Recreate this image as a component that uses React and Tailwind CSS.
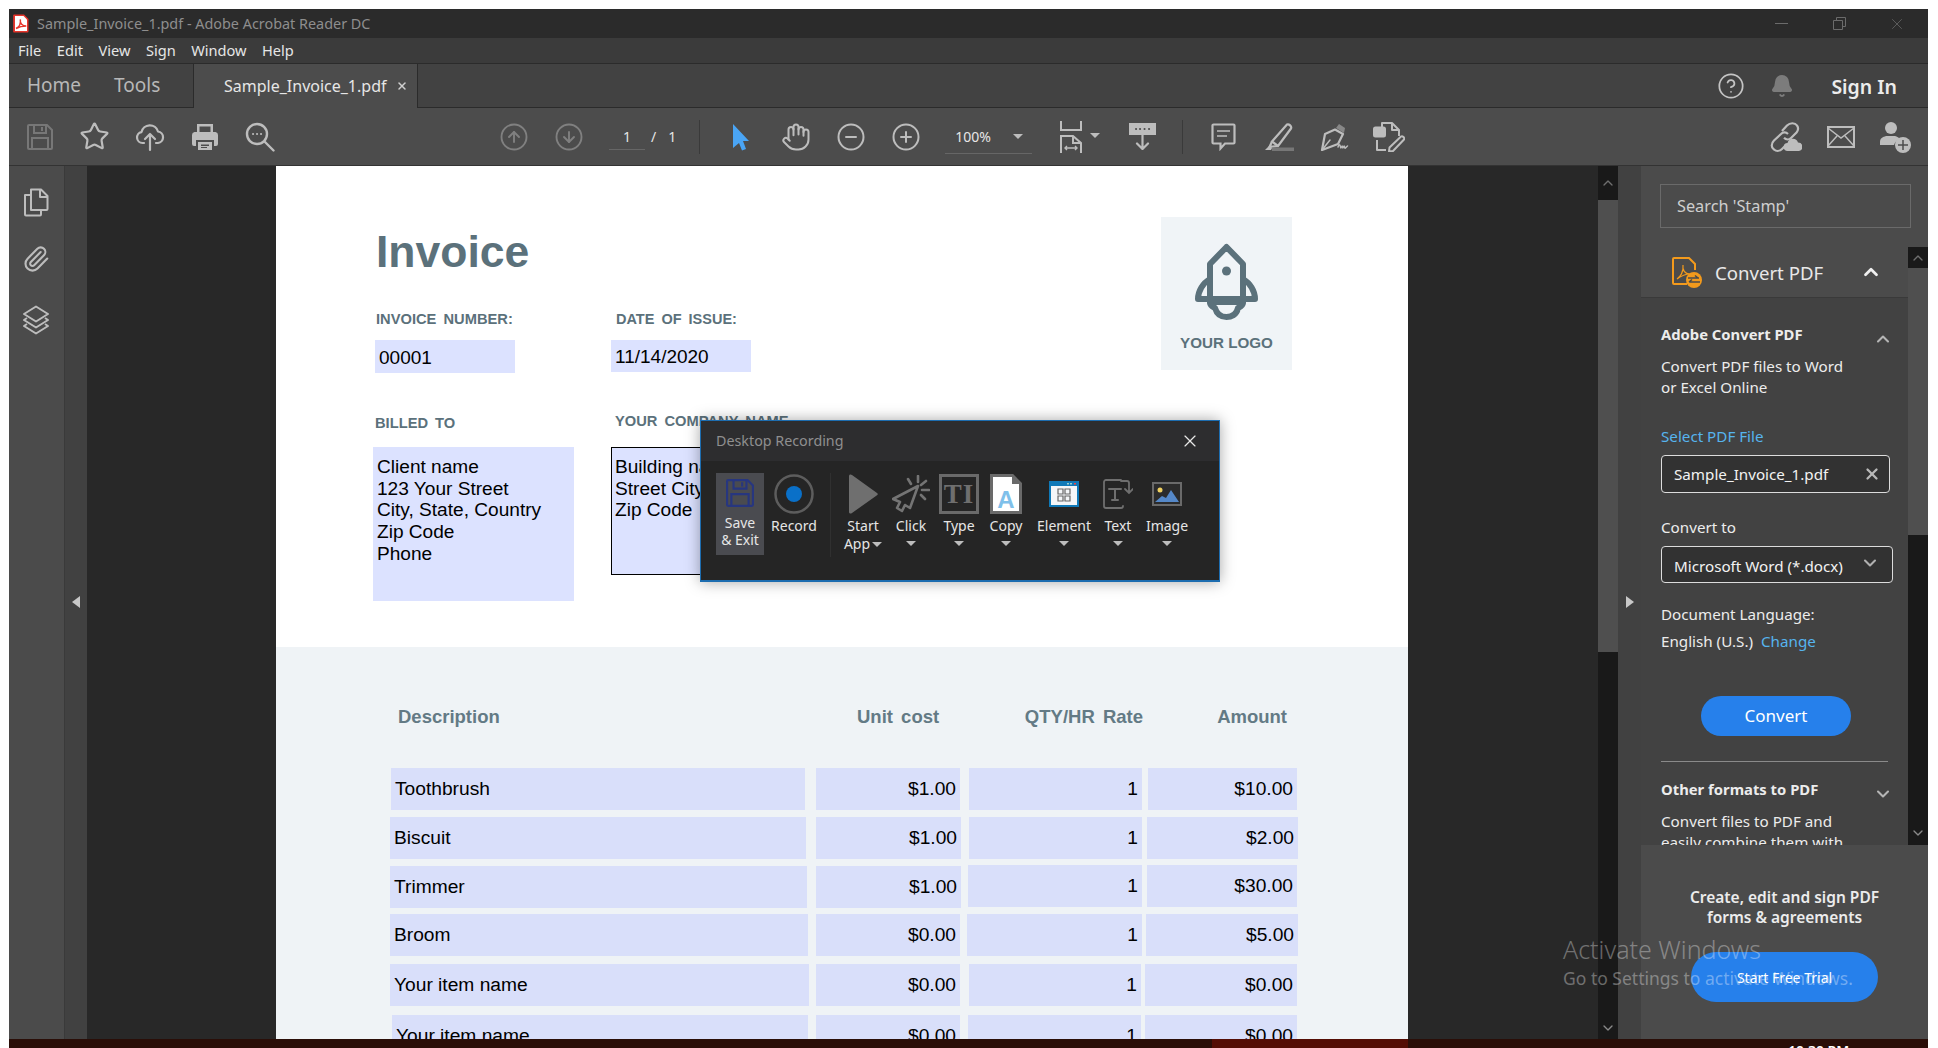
import { Star, Hand, CircleMinus, CirclePlus, CircleArrowUp, CircleArrowDown, ChevronUp, ChevronDown, X, Paperclip, CircleHelp, Bell } from "lucide-react";

const menuItems = ["File", "Edit", "View", "Sign", "Window", "Help"];

const rows = [
  { pad: "pl-[115px] mt-[40px]", name: "Toothbrush", unit: "$1.00", amount: "$10.00", d: "w-[414px]", u: "ml-[11px] w-[144px]", q: "ml-[9px] w-[173px]", a: "ml-[6px] w-[149px]" },
  { pad: "pl-[114px] mt-[7px]", name: "Biscuit", unit: "$1.00", amount: "$2.00", d: "w-[416px]", u: "ml-[10px] w-[145px]", q: "ml-[8px] w-[173px]", a: "ml-[5px] w-[151px]" },
  { pad: "pl-[114px] mt-[7px]", name: "Trimmer", unit: "$1.00", amount: "$30.00", d: "w-[417px]", u: "ml-[9px] w-[145px]", q: "ml-[7px] w-[174px] -mt-px", a: "ml-[5px] w-[150px] -mt-px" },
  { pad: "pl-[114px] mt-[6px]", name: "Broom", unit: "$0.00", amount: "$5.00", d: "w-[418px]", u: "ml-[8px] w-[144px]", q: "ml-[7px] w-[175px]", a: "ml-[4px] w-[152px]" },
  { pad: "pl-[114px] mt-[8px]", name: "Your item name", unit: "$0.00", amount: "$0.00", d: "w-[419px]", u: "ml-[7px] w-[144px]", q: "ml-[9px] w-[172px]", a: "ml-[4px] w-[152px]" },
  { pad: "pl-[116px] mt-[9px]", name: "Your item name", unit: "$0.00", amount: "$0.00", d: "w-[416px]", u: "ml-[8px] w-[144px]", q: "ml-[8px] w-[173px]", a: "ml-[4px] w-[152px]" },
];

// toolbar icons, drawn to match the reference
function SaveIcon({ className }) {
  return (
    <svg width="26" height="26" viewBox="0 0 26 26" fill="none" stroke="currentColor" strokeWidth="2" className={className}>
      <path d="M2 1h18l5 5v18a1 1 0 0 1-1 1H2a1 1 0 0 1-1-1V2a1 1 0 0 1 1-1z" />
      <path d="M7 1v8h12V1" />
      <path d="M5 25V14h16v11" />
      <path d="M15 3v4" />
    </svg>
  );
}

function CloudIcon() {
  return (
    <svg width="30" height="30" viewBox="0 0 30 30" fill="none" stroke="currentColor" strokeWidth="2.2" strokeLinecap="round" strokeLinejoin="round">
      <path d="M9 21H7.5a5.5 5.5 0 0 1-1-10.9A8.5 8.5 0 0 1 23 9.500a5.800 5.800 0 0 1 0 11.500H21" />
      <path d="M15 28V12M10 17l5-5 5 5" />
    </svg>
  );
}

function PrinterIcon() {
  return (
    <svg width="28" height="28" viewBox="0 0 28 28" fill="currentColor">
      <path d="M6 9V1h16v8h-2.500V3.500h-11V9z" />
      <path d="M3.500 9h21A3 3 0 0 1 27 12v9a2 2 0 0 1-2 2h-2v-6H5v6H3a2 2 0 0 1-2-2v-9a3 3 0 0 1 2.500-3z" />
      <path d="M7 19h14v8H7zm3 2.500v1.500h8v-1.500zm0 2.500v1h6v-1z" fillRule="evenodd" />
    </svg>
  );
}

function SearchDots() {
  return (
    <svg width="30" height="30" viewBox="0 0 30 30" fill="none" stroke="currentColor" strokeWidth="2.400" strokeLinecap="round">
      <circle cx="12" cy="12" r="10" />
      <path d="M19.500 19.500 28.500 28.500" />
      <path d="M8 12h.1M12 12h.1M16 12h.1" strokeWidth="2" />
    </svg>
  );
}

function ArrowPointer() {
  return (
    <svg width="18" height="28" viewBox="0 0 18 28" fill="#4aa5f5">
      <path d="M1 1 17 18h-6l3 8-4 1.500L7 20l-6 5z" />
    </svg>
  );
}

function FitIcon() {
  return (
    <svg width="22" height="32" viewBox="0 0 22 32" fill="none" stroke="currentColor" strokeWidth="2">
      <path d="M1 0v9h20V0" />
      <path d="M1 32V15h12l8 7v10" />
      <path d="M13 15v7h8" />
      <path d="M5 27h12M7 25l-2 2 2 2M15 25l2 2-2 2" strokeWidth="1.400" />
    </svg>
  );
}

function DownloadRuler() {
  return (
    <svg width="27" height="27" viewBox="0 0 27 27" fill="none" stroke="currentColor" strokeWidth="2.200" strokeLinecap="round">
      <path d="M1 1h25v10H1z" fill="currentColor" />
      <path d="M7 6h.1M11 6h.1M15.500 6h.1M20 6h.1" stroke="#4c4c4c" strokeWidth="2" />
      <path d="M13.500 11v15M8 20.500l5.500 5.500 5.500-5.500" />
    </svg>
  );
}

function CommentIcon() {
  return (
    <svg width="25" height="28" viewBox="0 0 25 28" fill="none" stroke="currentColor" strokeWidth="2.200">
      <path d="M2.500 1.500h20a1 1 0 0 1 1 1v17a1 1 0 0 1-1 1H14l-4.500 5v-5h-7a1 1 0 0 1-1-1v-17a1 1 0 0 1 1-1z" />
      <path d="M6 8h13M6 13h10" strokeWidth="1.600" />
    </svg>
  );
}

function MarkerIcon() {
  return (
    <svg width="30" height="28" viewBox="0 0 30 28" fill="none" stroke="currentColor" strokeWidth="2.200" strokeLinejoin="round">
      <path d="M23 1.500c2-1 5 2 4 4L14 23l-6-4.500z" />
      <path d="M8 18.500 5.500 24l8.500-1" />
      <path d="M1 27l4-4 3 2-1 2z" fill="currentColor" strokeWidth="0" />
      <path d="M8 24.500h22V28H8z" fill="#777" stroke="none" />
    </svg>
  );
}

function PenIcon() {
  return (
    <svg width="30" height="28" viewBox="0 0 30 28" fill="none" stroke="currentColor" strokeWidth="2.200" strokeLinejoin="round" strokeLinecap="round">
      <path d="M16 6.500 24 11l-5 10-16 6 3-16z" />
      <path d="M3 27 11 17" strokeWidth="1.500" />
      <path d="M17 5l3-4 6 4-1 5" fill="#888" stroke="none" />
      <path d="M19 24c1-3 2-3 2.500 0s1.500-3 2-0 1.500-3 2 0 1.500 0 3-1" strokeWidth="1.500" />
    </svg>
  );
}

function FillSignIcon() {
  return (
    <svg width="32" height="30" viewBox="0 0 32 30" fill="none" stroke="currentColor" strokeWidth="2" strokeLinejoin="round">
      <path d="M9 5V1h10l7 7v6" />
      <path d="M19 1v7h7" />
      <rect x="1" y="5.500" width="11" height="9" rx="1.500" fill="currentColor" />
      <path d="M4 18v10h9" />
      <path d="M28 14.500c1.500-1 4 1.500 3 3L20 29l-4 .5.500-4z" />
    </svg>
  );
}

function CloudLink() {
  return (
    <svg width="32" height="30" viewBox="0 0 32 30" fill="none" stroke="currentColor" strokeWidth="2.200">
      <path d="M12 9l5-5.500c3-3 8-3 10 0 1.500 2 1 5-.5 7l-5.500 5.500c-2 2-5 1.800-7-.2" />
      <path d="M18 12c-2-2-5-2.200-7 0l-7 6.500c-3 3-3 7 0 9 2.500 2 6 1.500 8-.5l4-4" />
      <path d="M18 29a4 4 0 0 1-.5-8 5.500 5.500 0 0 1 10.500-.5 4.300 4.300 0 0 1 1 8.500z" fill="currentColor" stroke="none" />
    </svg>
  );
}

function MailBox() {
  return (
    <svg width="28" height="22" viewBox="0 0 28 22" fill="none" stroke="currentColor" strokeWidth="2">
      <rect x="1" y="1" width="26" height="20" />
      <path d="M1 2l13 10L27 2M1 20l9-10M27 20l-9-10" strokeWidth="1.500" />
    </svg>
  );
}

function UserPlus() {
  return (
    <svg width="32" height="32" viewBox="0 0 32 32" fill="currentColor">
      <circle cx="11" cy="7" r="6" />
      <path d="M0 24v-3c0-4 3-5 6-6h9c2 .5 4 1.500 5 3a9 9 0 0 0-6 6z" />
      <circle cx="23" cy="24" r="8" />
      <path d="M23 19v10M18 24h10" stroke="#4c4c4c" strokeWidth="1.500" />
    </svg>
  );
}

function PagesIcon() {
  return (
    <svg width="26" height="29" viewBox="0 0 26 29" fill="none" stroke="currentColor" strokeWidth="2" strokeLinejoin="round">
      <path d="M8 21V1.500h10l6.500 6.500v13a1 1 0 0 1-1 1H8z" />
      <path d="M17 1.500V9h7.500" />
      <path d="M7 7H2v19.500a1 1 0 0 0 1 1h14a1 1 0 0 0 1-1V22" />
    </svg>
  );
}

function LayersIcon({ className }) {
  return (
    <svg width="28" height="30" viewBox="0 0 28 30" fill="none" stroke="currentColor" strokeWidth="2" strokeLinejoin="round" className={className}>
      <path d="M14 1.500 26 9l-12 7.500L2 9z" />
      <path d="M5 13 2 15l12 7.500L26 15l-3-2" />
      <path d="M5 19l-3 2 12 7.500L26 21l-3-2" />
    </svg>
  );
}

function ConvertIcon() {
  return (
    <svg width="30" height="31" viewBox="0 0 30 31" fill="none" stroke="#f39a1c" strokeWidth="2">
      <path d="M15 27H2a1 1 0 0 1-1-1V2a1 1 0 0 1 1-1h15l6 6v6" />
      <path d="M5 22c3-2 7-7 6-14-1 5 2 9 7 9-5 0-9 2-13 5z" strokeWidth="1.200" />
      <circle cx="22" cy="23" r="8" fill="#f39a1c" stroke="none" />
      <path d="M16 21h11M23 18.500l3 2.500M28 25H17M20 22.500 17 25" stroke="#4b4b4b" strokeWidth="1.600" />
    </svg>
  );
}

function AcrobatIcon() {
  return (
    <svg width="16" height="19" viewBox="0 0 16 19" className="shrink-0">
      <path d="M1 .5h10l4.500 4.500v12.500a1 1 0 0 1-1 1H1a.8.8 0 0 1-.8-1V1.300A.8.8 0 0 1 1 .5z" fill="#e8352b" />
      <path d="M2 2h8.500L14 5.500V17H2z" fill="#fff" />
      <path d="M3 14.500c3-1.500 5-5 4.300-9-.5 4 2 6.500 6 6.500-4 0-7 .7-10.300 2.500z" fill="none" stroke="#e8352b" strokeWidth="1.500" />
    </svg>
  );
}

function RocketLogo() {
  return (
    <svg width="63" height="77" viewBox="0 0 63 77" fill="none" stroke="#5b717b" strokeWidth="6" strokeLinejoin="round">
      <path d="M31.500 4 15 21v38h33V21z" />
      <path d="M15 36C8 40 3 48 3 56h57c0-8-5-16-12-20" />
      <path d="M15 59c0 4 3 5 5 6 2 7 7 9 11.500 9s10-2 11.500-9c2-1 5-2 5-6" />
      <circle cx="31.500" cy="28" r="4.500" fill="#5b717b" stroke="none" />
    </svg>
  );
}

function Slot({ children, className = "w-[55px]" }) {
  return <div className={`flex shrink-0 items-center justify-center ${className}`}>{children}</div>;
}

function Caret({ className = "" }) {
  return <div className={`h-0 w-0 border-x-[5px] border-t-[5px] border-x-transparent border-t-[#bdbdbd] ${className}`} />;
}

function RecordTool({ icon, label, line2, noCaret, className }) {
  return (
    <div className={`flex shrink-0 flex-col items-center pt-[1px] ${className}`}>
      <div className="flex h-[40px] items-center justify-center">{icon}</div>
      <div className="mt-[3px] text-[14px] leading-[18px] text-[#e6e6e6]">{label}</div>
      {line2 && (
        <div className="flex items-center gap-[2px] text-[14px] leading-[18px] text-[#e6e6e6]">
          {line2}
          <Caret className="border-t-[#aaa]" />
        </div>
      )}
      {!line2 && !noCaret && <Caret className="mt-[6px] border-t-[#aaa]" />}
    </div>
  );
}

function RecordingDialog() {
  return (
    <div className="absolute left-[700px] top-[420px] h-[162px] w-[520px] border border-b-2 border-[#1d6db0] bg-[#252525] font-['Noto_Sans',sans-serif] shadow-[0_0_14px_rgba(0,0,0,0.35)]">
      <div className="flex h-[40px] items-center justify-between bg-[#2d2d2f] pl-[15px] pr-[19px]">
        <span className="text-[14.300px] text-[#8f8f8f]">Desktop Recording</span>
        <X size={20} strokeWidth={1.4} className="text-[#e8e8e8]" />
      </div>
      <div className="flex pl-[15px] pt-[12px]">
        <div className="flex h-[82px] w-[48px] shrink-0 flex-col items-center bg-[#4a4b50] pt-[5px]">
          <div className="relative text-[#27367f]">
            <SaveIcon className="h-[30px] w-[28px]" />
          </div>
          <div className="mt-[6px] text-center text-[14px] leading-[17px] text-[#e6e6e6]">
            Save
            <br />
            &amp;&nbsp;Exit
          </div>
        </div>
        <RecordTool
          className="w-[60px]"
          label="Record"
          noCaret
          icon={
            <svg width="40" height="40" viewBox="0 0 40 40">
              <circle cx="20" cy="20" r="18.500" fill="none" stroke="#5d5d5d" strokeWidth="2.500" />
              <circle cx="20" cy="20" r="8" fill="#0a70c8" />
            </svg>
          }
        />
        <div className="ml-[6px] mr-[10px] h-[84px] w-px shrink-0 bg-[#303030]" />
        <RecordTool
          className="w-[44px]"
          label="Start"
          line2="App"
          icon={
            <svg width="30" height="40" viewBox="0 0 30 40" fill="#6f6f6f">
              <path d="M1 2c0-1.500 1.500-2 3-1l25 18c1 .8 1 1.500 0 2.200L4 39c-1.500 1-3 .5-3-1z" />
            </svg>
          }
        />
        <RecordTool
          className="w-[52px]"
          label="Click"
          icon={
            <svg width="38" height="38" viewBox="0 0 38 38" fill="none" stroke="#747474" strokeWidth="2.600" strokeLinejoin="round">
              <path d="M26 11 1 24l7 3-3 6 5 3 3-6 5 3z" />
              <path d="M16 4l3 5M26 1v6M34 6l-5 4M37 15h-7M33 24l-4-4" strokeLinecap="round" />
            </svg>
          }
        />
        <RecordTool
          className="w-[44px]"
          label="Type"
          icon={
            <div className="flex h-[40px] w-[40px] items-center justify-center border-[3px] border-[#6a6a6a] font-['Liberation_Serif',serif] text-[27px] font-bold leading-none tracking-[1px] text-[#6f6f6f]">
              TI
            </div>
          }
        />
        <RecordTool
          className="w-[50px]"
          label="Copy"
          icon={
            <svg width="32" height="40" viewBox="0 0 32 40">
              <path d="M1.500 1.500h21l8 8v29h-29z" fill="#fff" stroke="#6a6a6a" strokeWidth="3" />
              <path d="M22 1v9h9z" fill="#6a6a6a" />
              <text x="16" y="34" textAnchor="middle" fontFamily="Liberation Sans, sans-serif" fontWeight="700" fontSize="24" fill="#7fc0ea">A</text>
            </svg>
          }
        />
        <RecordTool
          className="w-[66px]"
          label="Element"
          icon={
            <svg width="30" height="26" viewBox="0 0 30 26">
              <rect width="30" height="26" fill="#0f79b8" />
              <rect x="2" y="5" width="26" height="19" fill="#f4f6f8" />
              <path d="M9 8h5v5H9zM16 8h5v5h-5zM9 15h5v5H9zM16 15h5v5h-5z" fill="none" stroke="#666" strokeWidth="1.200" />
              <path d="M18 2h2v1.500h-2zM21 2h2v1.500h-2z" fill="#9cc" />
              <path d="M25 2h2v1.500h-2z" fill="#e44" />
            </svg>
          }
        />
        <RecordTool
          className="w-[42px]"
          label="Text"
          icon={
            <svg width="30" height="30" viewBox="0 0 30 30" fill="none" stroke="#6f6f6f" strokeWidth="1.800" strokeLinecap="round">
              <path d="M18 1H3a2 2 0 0 0-2 2v24a2 2 0 0 0 2 2h15a2 2 0 0 0 2-2" />
              <path d="M6 10h12M12 10v11M9 21h6" strokeWidth="2" />
              <path d="M18 2h6a2 2 0 0 1 2 2v9M22 10l4 4 4-4" />
            </svg>
          }
        />
        <RecordTool
          className="w-[56px]"
          label="Image"
          icon={
            <svg width="30" height="24" viewBox="0 0 30 24">
              <rect x="1" y="1" width="28" height="22" fill="#2b2b2b" stroke="#6a6a6a" strokeWidth="2" />
              <circle cx="8" cy="8" r="2.500" fill="#f0d060" />
              <path d="M3 20l7-6 4 2 5-8 8 12z" fill="#5588c8" />
            </svg>
          }
        />
      </div>
    </div>
  );
}

function ScrollBar({ thumbClass, topClass, chevronClass = "" }) {
  return (
    <div className="flex h-full w-[20px] shrink-0 flex-col items-center bg-[#191919]">
      <div className={`flex w-full shrink-0 items-center justify-center ${topClass}`}>
        <ChevronUp size={16} strokeWidth={2} className="text-[#6f6f6f]" />
      </div>
      <div className={`w-full shrink-0 bg-[#4f4f4f] ${thumbClass}`} />
      <div className="flex-1" />
      <ChevronDown size={16} strokeWidth={2} className={`shrink-0 text-[#8a8a8a] ${chevronClass}`} />
    </div>
  );
}

function InvoicePage() {
  return (
    <div className="h-full w-[1132px] shrink-0 overflow-hidden bg-white font-['Liberation_Sans',Arial,sans-serif]">
      <div className="flex h-[481px] pl-[97px]">
        <div className="w-[238px] shrink-0">
          <h1 className="ml-[3px] mt-[64px] text-[44.500px] font-bold leading-[44px] text-[#5b717b]">Invoice</h1>
          <div className="ml-[3px] mt-[37px] text-[14.700px] font-bold leading-[16px] text-[#5b717b] [word-spacing:3px]">INVOICE NUMBER:</div>
          <div className="ml-[2px] mt-[13px] h-[33px] w-[140px] bg-[#dce2ff] pl-[4px] pt-[1px] text-[19px] leading-[33px] text-black">00001</div>
          <div className="ml-[2px] mt-[42px] text-[14.700px] font-bold leading-[16px] text-[#5b717b] [word-spacing:3px]">BILLED TO</div>
          <div className="mt-[16px] h-[154px] w-[201px] bg-[#dce2ff] pl-[4px] pt-[9px] text-[19.100px] leading-[21.700px] text-black">
            Client name
            <br />
            123 Your Street
            <br />
            City, State, Country
            <br />
            Zip Code
            <br />
            Phone
          </div>
        </div>
        <div className="w-[550px] shrink-0 pt-[108px]">
          <div className="ml-[5px] mt-[37px] text-[14.500px] font-bold leading-[16px] text-[#5b717b] [word-spacing:3px]">DATE OF ISSUE:</div>
          <div className="mt-[13px] h-[32px] w-[140px] bg-[#dce2ff] pl-[4px] pt-[1px] text-[19px] leading-[32px] text-black">11/14/2020</div>
          <div className="ml-[4px] mt-[41px] text-[14.700px] font-bold leading-[16px] text-[#5b717b] [word-spacing:3px]">YOUR COMPANY NAME</div>
          <div className="mt-[18px] h-[128px] w-[200px] border border-black bg-[#dce2ff] pl-[3px] pt-[8px] text-[19.100px] leading-[21.700px] text-black">
            Building name
            <br />
            Street City
            <br />
            Zip Code
          </div>
        </div>
        <div className="mt-[51px] flex h-[153px] w-[131px] shrink-0 flex-col items-center bg-[#f0f4f7] pt-[26px]">
          <RocketLogo />
          <div className="mt-[13px] text-[15.200px] font-bold leading-[20px] text-[#5b717b]">YOUR LOGO</div>
        </div>
      </div>
      <div className="h-full bg-[#eff3f6]">
        <div className="flex pl-[122px] pt-[59px] text-[18.500px] font-bold leading-[22px] text-[#637a85] [word-spacing:3px]">
          <div className="w-[459px] shrink-0">Description</div>
          <div className="w-[82px] shrink-0 whitespace-nowrap text-right">Unit cost</div>
          <div className="w-[204px] shrink-0 text-right">QTY/HR Rate</div>
          <div className="w-[144px] shrink-0 text-right">Amount</div>
        </div>
        {rows.map((r, i) => (
          <div key={i} className={`flex h-[42px] items-start text-[19.200px] leading-[42px] text-black ${r.pad}`}>
            <div className={`h-[42px] shrink-0 bg-[#d9dffa] pl-[4px] ${r.d}`}>{r.name}</div>
            <div className={`h-[42px] shrink-0 bg-[#d9dffa] pr-[4px] text-right ${r.u}`}>{r.unit}</div>
            <div className={`h-[42px] shrink-0 bg-[#d9dffa] pr-[4px] text-right ${r.q}`}>1</div>
            <div className={`h-[42px] shrink-0 bg-[#d9dffa] pr-[4px] text-right ${r.a}`}>{r.amount}</div>
          </div>
        ))}
      </div>
    </div>
  );
}

function ToolsPanel() {
  return (
    <div className="flex h-full w-[287px] shrink-0 flex-col bg-[#4b4b4b]">
      <div className="h-[81px] shrink-0 pl-[19px] pt-[18px]">
        <div className="flex h-[44px] w-[251px] items-center border border-[#6a6a6a] pl-[16px] pt-[1px] text-[16.300px] text-[#cfcfcf]">Search 'Stamp'</div>
      </div>
      <div className="flex h-[598px] shrink-0">
        <div className="flex w-[267px] shrink-0 flex-col">
          <div className="flex h-[51px] shrink-0 items-center border-b border-[#3a3a3a] pl-[31px]">
            <ConvertIcon />
            <span className="ml-[13px] pt-[1px] text-[18.600px] text-[#e8e8e8]">Convert PDF</span>
            <ChevronUp size={22} strokeWidth={3} className="ml-[37px] text-[#f0f0f0]" />
          </div>
          <div className="flex-1 overflow-hidden bg-[#424242] pl-[20px] pt-[26px] text-[15.200px] text-[#ececec]">
            <div className="flex h-[20px] items-center justify-between pr-[15px] text-[14.800px] font-bold leading-[20px]">
              Adobe Convert PDF
              <ChevronUp size={20} strokeWidth={2.500} className="mt-[9px] text-[#b5b5b5]" />
            </div>
            <div className="mt-[12px] leading-[21px]">
              Convert PDF files to Word
              <br />
              or Excel Online
            </div>
            <div className="mt-[28px] leading-[20px] text-[#56b4ee]">Select PDF File</div>
            <div className="mt-[9px] flex h-[38px] w-[229px] items-center justify-between rounded-[4px] border border-[#dcdcdc] bg-[#323232] pl-[12px] pr-[8px] text-[#f2f2f2]">
              Sample_Invoice_1.pdf
              <X size={18} strokeWidth={3} className="text-[#b8b8b8]" />
            </div>
            <div className="mt-[24px] leading-[20px]">Convert to</div>
            <div className="mt-[9px] flex h-[37px] w-[232px] items-center justify-between rounded-[4px] border border-[#dcdcdc] bg-[#323232] pl-[12px] pr-[12px] text-[#f2f2f2]">
              <span className="mt-[3px]">Microsoft Word (*.docx)</span>
              <ChevronDown size={20} strokeWidth={2.500} className="mb-[4px] text-[#b0b0b0]" />
            </div>
            <div className="mt-[21px] leading-[20px]">Document Language:</div>
            <div className="mt-[7px] leading-[20px]">
              English (U.S.)<span className="ml-[8px] text-[#56b4ee]">Change</span>
            </div>
            <div className="ml-[40px] mt-[45px] flex h-[40px] w-[150px] items-center justify-center rounded-full bg-[#2680eb] text-[17px] text-white">Convert</div>
            <div className="mt-[25px] h-px w-[227px] bg-[#8a8a8a]" />
            <div className="mt-[17px] flex h-[20px] items-center justify-between pr-[15px] text-[14.800px] font-bold leading-[20px]">
              Other formats to PDF
              <ChevronDown size={20} strokeWidth={2.500} className="mt-[9px] text-[#b5b5b5]" />
            </div>
            <div className="mt-[12px] leading-[21px]">
              Convert files to PDF and
              <br />
              easily combine them with
            </div>
          </div>
        </div>
        <ScrollBar topClass="h-[21px]" thumbClass="h-[267px]" chevronClass="mb-[4px]" />
      </div>
      <div className="flex flex-1 flex-col items-center pt-[42px] text-center">
        <div className="text-[15.500px] font-semibold leading-[20px] text-[#ececec]">
          Create, edit and sign PDF
          <br />
          forms &amp; agreements
        </div>
        <div className="mt-[25px] flex h-[50px] w-[187px] items-center justify-center rounded-full bg-[#2680eb] text-[14px] text-white">Start Free Trial</div>
      </div>
    </div>
  );
}

export default function App() {
  return (
    <div className="relative flex h-[1048px] w-[1938px] flex-col overflow-hidden bg-white pl-[9px] pr-[10px] pt-[9px] font-['Noto_Sans',sans-serif]">
      {/* title bar */}
      <div className="flex h-[29px] shrink-0 items-center bg-[#2b2b2b] pl-[4px]">
        <AcrobatIcon />
        <span className="ml-[8px] text-[14.400px] text-[#8e8e8e]">Sample_Invoice_1.pdf - Adobe Acrobat Reader DC</span>
        <div className="ml-auto flex items-center text-[#6b6b6b]">
          <Slot className="w-[58px]">
            <div className="h-px w-[13px] bg-[#6b6b6b]" />
          </Slot>
          <Slot className="w-[58px]">
            <svg width="13" height="13" viewBox="0 0 13 13" fill="none" stroke="currentColor">
              <path d="M.5 3.500h9v9h-9zM3.500 3.500v-3h9v9h-3" />
            </svg>
          </Slot>
          <Slot className="w-[58px]">
            <X size={18} strokeWidth={1} />
          </Slot>
          <div className="w-[2px]" />
        </div>
      </div>

      {/* menu bar */}
      <div className="flex h-[26px] shrink-0 items-center gap-[15.500px] border-b border-[#2b2b2b] bg-[#3b3b3b] pl-[9px] text-[14.600px] text-[#e6e6e6]">
        {menuItems.map((m) => (
          <span key={m}>{m}</span>
        ))}
      </div>

      {/* tabs */}
      <div className="flex h-[44px] shrink-0 border-b border-[#2b2b2b] bg-[#424242] text-[#b8b8b8]">
        <div className="flex w-[184px] shrink-0 items-center gap-[33px] pl-[18px] text-[19px]">
          <span>Home</span>
          <span>Tools</span>
        </div>
        <div className="-mb-px flex w-[225px] shrink-0 items-center border-x border-[#2b2b2b] bg-[#4c4c4c] pl-[30px] text-[16px] text-[#e6e6e6]">
          Sample_Invoice_1.pdf
          <X size={12} strokeWidth={3} className="ml-[9px] text-[#cfcfcf]" />
        </div>
        <div className="ml-auto flex items-center">
          <CircleHelp size={28} strokeWidth={1.500} className="text-[#c4c4c4]" />
          <Bell size={24} fill="currentColor" className="ml-[25px] text-[#7c7c7c]" />
          <span className="ml-[37px] mr-[31px] pt-[2px] text-[19.500px] font-semibold text-[#ececec]">Sign In</span>
        </div>
      </div>

      {/* toolbar */}
      <div className="flex h-[58px] shrink-0 items-center border-b border-[#333] bg-[#4c4c4c] pl-[3px] text-[#bdbdbd]">
        <Slot>
          <SaveIcon className="text-[#777]" />
        </Slot>
        <Slot>
          <Star size={31} strokeWidth={1.700} />
        </Slot>
        <Slot>
          <CloudIcon />
        </Slot>
        <Slot>
          <PrinterIcon />
        </Slot>
        <Slot>
          <SearchDots />
        </Slot>
        <Slot className="ml-[199px] w-[55px]">
          <CircleArrowUp size={30} strokeWidth={1.500} className="text-[#808080]" />
        </Slot>
        <Slot>
          <CircleArrowDown size={30} strokeWidth={1.500} className="text-[#808080]" />
        </Slot>
        <div className="ml-[13px] flex h-[26px] w-[36px] shrink-0 items-center justify-center border-b border-[#666] text-[14px] text-[#e6e6e6]">1</div>
        <span className="ml-[6px] text-[14px] text-[#e6e6e6]">/</span>
        <span className="ml-[12px] text-[14px] text-[#e6e6e6]">1</span>
        <div className="ml-[23px] h-[34px] w-px shrink-0 bg-[#3a3a3a]" />
        <Slot className="ml-[13px] w-[55px]">
          <ArrowPointer />
        </Slot>
        <Slot>
          <Hand size={30} strokeWidth={1.600} />
        </Slot>
        <Slot>
          <CircleMinus size={30} strokeWidth={1.600} />
        </Slot>
        <Slot>
          <CirclePlus size={30} strokeWidth={1.600} />
        </Slot>
        <div className="ml-[12px] flex h-[34px] w-[87px] shrink-0 items-center justify-between border-b border-[#666] pl-[10px] pr-[9px] text-[14px] text-[#e6e6e6]">
          100%
          <Caret />
        </div>
        <Slot className="ml-[28px] w-[22px]">
          <FitIcon />
        </Slot>
        <Caret className="ml-[8px] mb-[2px]" />
        <Slot className="ml-[29px] w-[27px]">
          <DownloadRuler />
        </Slot>
        <div className="ml-[26px] h-[34px] w-px shrink-0 bg-[#3a3a3a]" />
        <Slot className="ml-[13px] w-[55px]">
          <CommentIcon />
        </Slot>
        <Slot>
          <MarkerIcon />
        </Slot>
        <Slot>
          <PenIcon />
        </Slot>
        <Slot>
          <FillSignIcon />
        </Slot>
        <div className="ml-auto flex pr-[5px]">
          <Slot>
            <CloudLink />
          </Slot>
          <Slot>
            <MailBox />
          </Slot>
          <Slot>
            <UserPlus />
          </Slot>
        </div>
      </div>

      {/* main area */}
      <div className="flex h-[873px] shrink-0 overflow-hidden">
        <div className="flex w-[56px] shrink-0 flex-col items-center border-r border-[#3a3a3a] bg-[#4b4b4b] pr-[1px] pt-[22px] text-[#bdbdbd]">
          <PagesIcon />
          <Paperclip size={28} strokeWidth={1.800} className="mt-[28px]" />
          <LayersIcon className="mt-[32px]" />
        </div>
        <div className="flex w-[22px] shrink-0 flex-col items-center bg-[#414141] pt-[430px]">
          <div className="h-0 w-0 border-y-[6px] border-r-[8px] border-y-transparent border-r-[#c8c8c8]" />
        </div>
        <div className="flex w-[1511px] shrink-0 bg-[#282828] pl-[189px]">
          <InvoicePage />
        </div>
        <ScrollBar topClass="h-[34px]" thumbClass="h-[452px]" chevronClass="mb-[3px]" />
        <div className="flex w-[23px] shrink-0 flex-col items-center bg-[#414141] pt-[430px]">
          <div className="h-0 w-0 border-y-[6px] border-l-[8px] border-y-transparent border-l-[#c8c8c8]" />
        </div>
        <ToolsPanel />
      </div>

      {/* windows taskbar strip */}
      <div className="flex h-[9px] shrink-0 overflow-hidden bg-[#2a0e08]">
        <div className="ml-[1203px] w-[196px] shrink-0 bg-[#540d05]" />
        <span className="ml-[380px] mt-[5px] text-[14px] font-semibold leading-[14px] text-white">10:30 PM</span>
      </div>

      <RecordingDialog />

      {/* activation watermark */}
      <div className="pointer-events-none absolute left-[1563px] top-[933px] text-white/35">
        <div className="text-[25px] font-light leading-[32px]">Activate Windows</div>
        <div className="text-[17.500px] leading-[26px]">Go to Settings to activate Windows.</div>
      </div>
    </div>
  );
}
